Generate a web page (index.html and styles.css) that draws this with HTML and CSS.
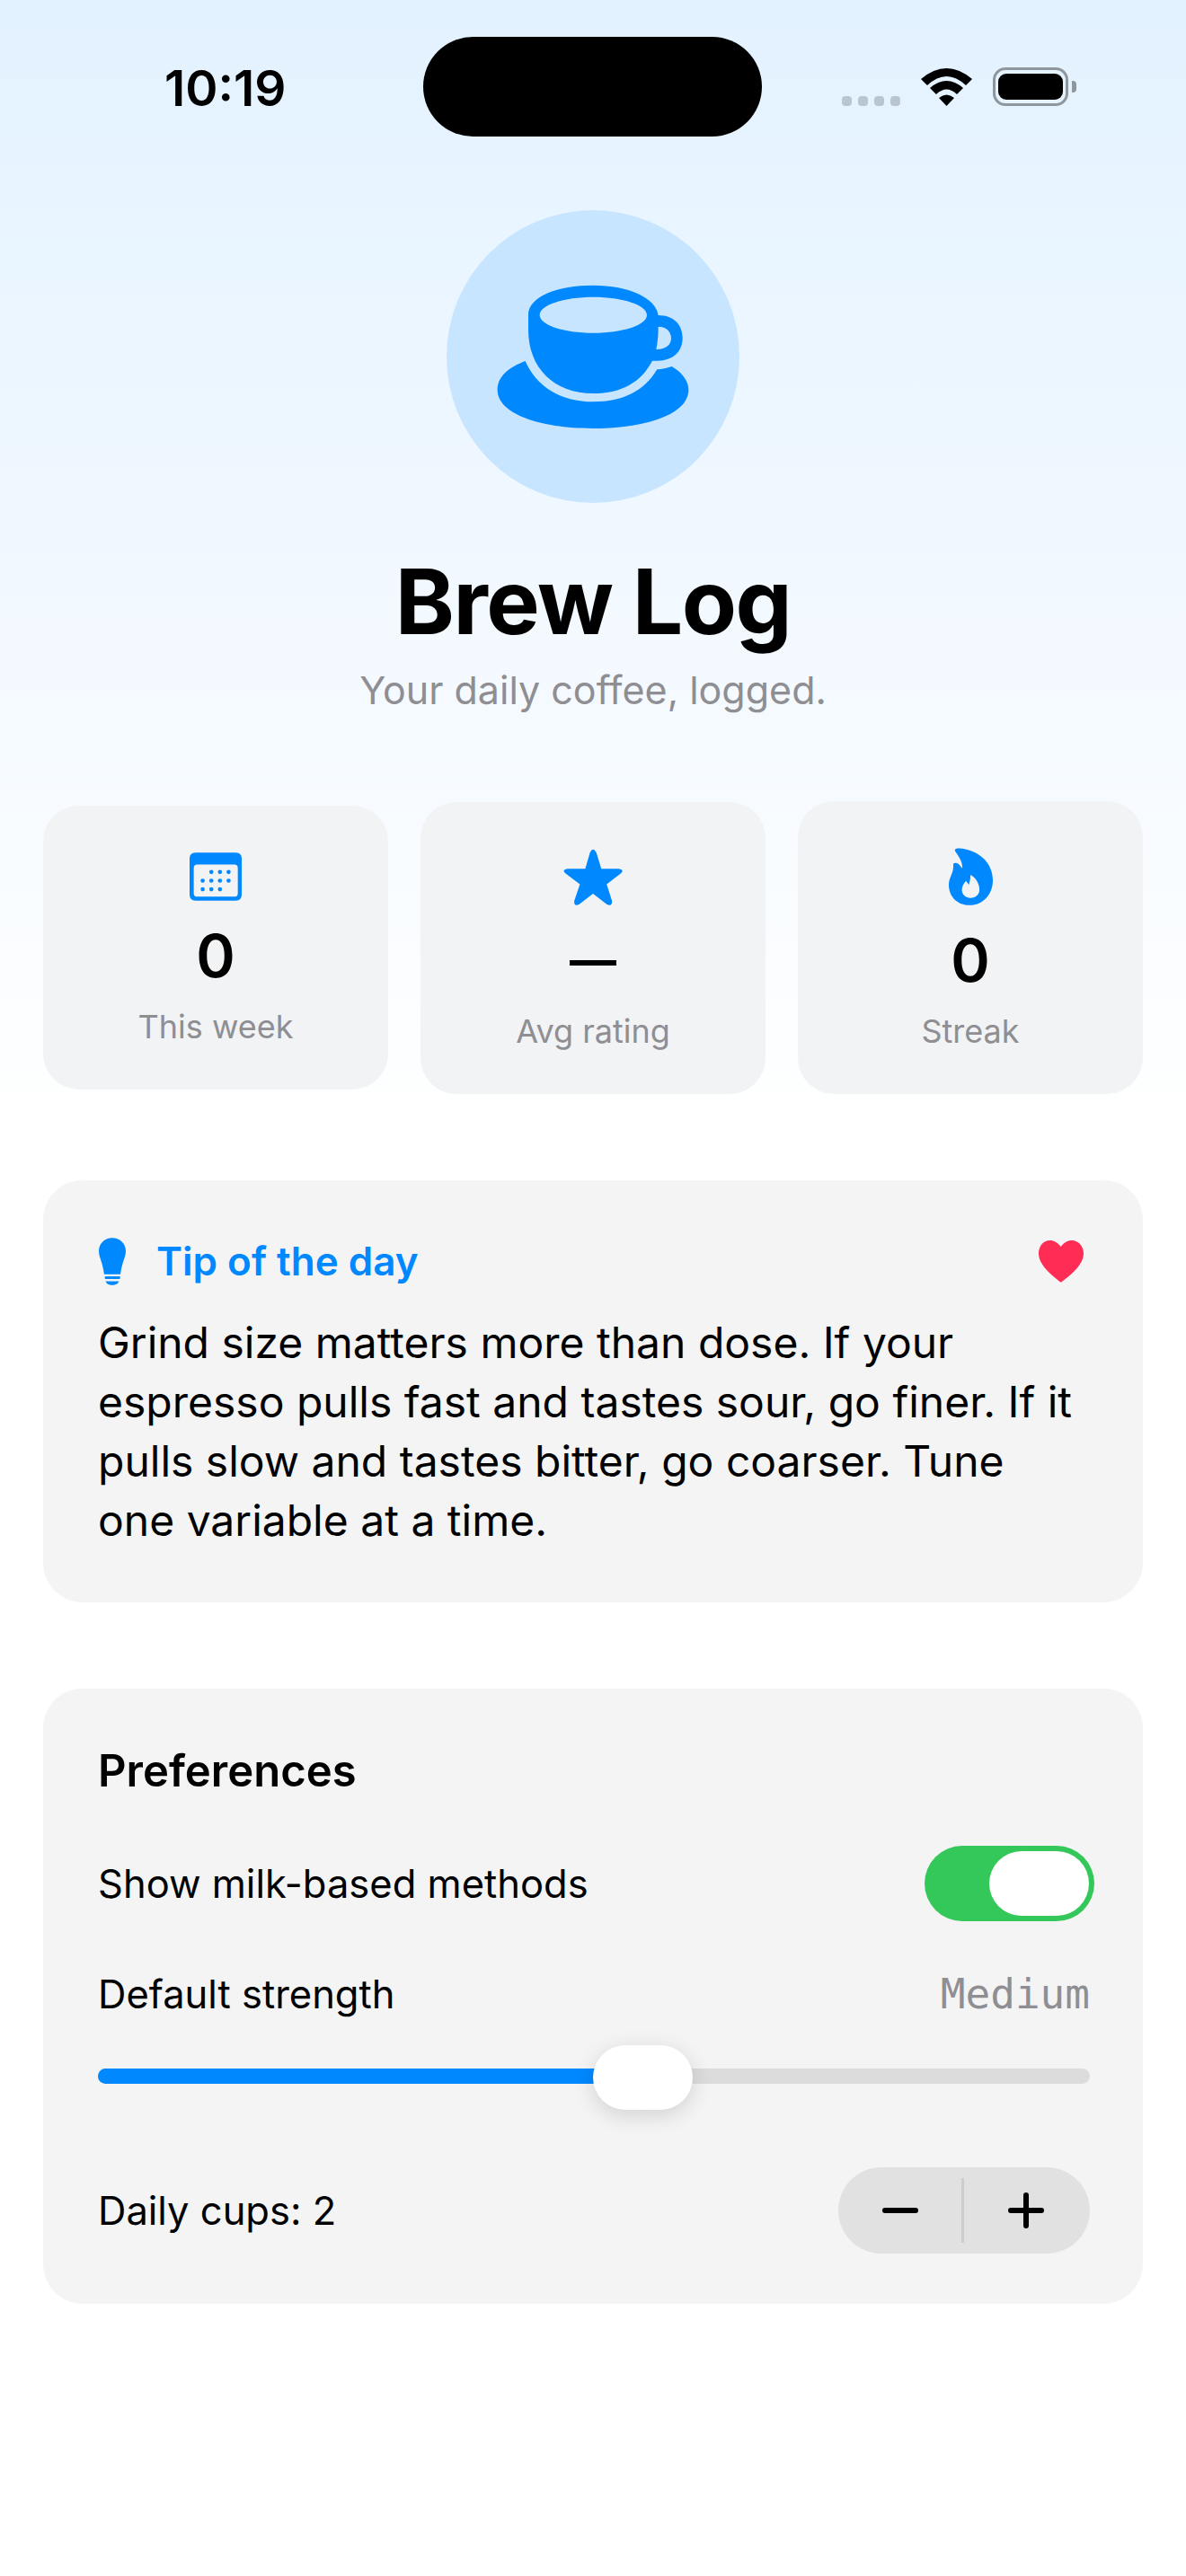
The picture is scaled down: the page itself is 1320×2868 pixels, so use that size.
FILE: index.html
```html
<!DOCTYPE html>
<html lang="en">

<head>
  <meta charset="UTF-8" />
  <meta name="viewport" content="width=device-width, initial-scale=1.0" />
  <title>Brew Log</title>
  <link rel="stylesheet" href="styles.css">
</head>

<body>
  <div class="status-bar">
    <span class="time">10:19</span>
    <div class="island"></div>
    <div class="status-icons">
      <div class="signal"><i></i><i></i><i></i><i></i></div>
      <svg class="wifi" viewBox="0 0 57 42">
        <path d="M0 12Q28.5 -12 57 12L50 19Q28.5 -1 7 19Z" />
        <path d="M10 22Q28.5 6 47 22L40 29Q28.5 18 17 29Z" />
        <path d="M20 33Q28.5 26 37 33L28.5 42Z" />
      </svg>
      <div class="battery"><div class="battery-fill"></div></div>
      <div class="battery-cap"></div>
    </div>
  </div>

  <header class="hero">
    <div class="hero-circle">
      <svg class="cup" viewBox="170 71 978 978">
        <path d="M433 575C380 595 340 625 340 672C340 750 480 800 658 800C840 800 978 750 978 672C978 640 955 612 922 593C905 599 890 602 873 603C830 675 760 711 660 711C550 711 470 660 433 575Z" />
        <path fill-rule="evenodd" d="M443 420C443 360 540 322 660 322C780 322 870 365 877 422C930 422 958 455 958 498C958 545 925 574 875 574L857 574C820 645 755 683 660 683C530 683 443 600 443 470ZM481 421C481 454 561 481 660 481C759 481 839 454 839 421C839 388 759 361 660 361C561 361 481 388 481 421ZM877 460C877 490 875 510 870 536C905 536 920 520 920 498C920 478 905 460 877 460Z" />
      </svg>
    </div>
    <h1>Brew Log</h1>
    <p class="subtitle">Your daily coffee, logged.</p>
  </header>

  <section class="stats">
    <div class="stat-card">
      <svg class="stat-icon" width="58" height="54" viewBox="543 237 175 161">
        <path fill-rule="evenodd" d="M563 237H698Q718 237 718 257V378Q718 398 698 398H563Q543 398 543 378V257Q543 237 563 237ZM569 277Q557 277 557 289V373Q557 385 569 385H693Q705 385 705 373V289Q705 277 693 277Z" />
        <circle cx="616" cy="302" r="7" /><circle cx="645" cy="302" r="7" /><circle cx="674" cy="302" r="7" />
        <circle cx="587" cy="331" r="7" /><circle cx="616" cy="331" r="7" /><circle cx="645" cy="331" r="7" /><circle cx="674" cy="331" r="7" />
        <circle cx="587" cy="360" r="7" /><circle cx="616" cy="360" r="7" /><circle cx="645" cy="360" r="7" />
      </svg>
      <div class="stat-value">0</div>
      <div class="stat-label">This week</div>
    </div>
    <div class="stat-card">
      <svg class="stat-icon" width="66" height="63" viewBox="530 221 198 190">
        <path d="M603 288L619 233Q629 213 640 233L657 288L716 288Q736 292 722 304L675 340L693 397Q693 417 675 407L629 372L583 407Q565 417 566 397L585 340L537 304Q523 292 543 288Z" />
      </svg>
      <div class="stat-value stat-dash">—</div>
      <div class="stat-label">Avg rating</div>
    </div>
    <div class="stat-card">
      <svg class="stat-icon" width="49" height="64" viewBox="527 222 148 192">
        <path fill-rule="evenodd" d="M548 232C546 226 552 222 560 223C625 226 675 270 675 330C675 380 640 414 598 414C555 414 527 385 527 345C527 320 545 305 542 278C541 270 553 270 560 276L572 290C575 270 560 250 548 232ZM600 312C600 322 598 335 594 345L585 332C578 340 571 350 571 362C571 378 583 390 600 390C618 390 630 378 630 362C630 345 620 322 600 312Z" />
      </svg>
      <div class="stat-value">0</div>
      <div class="stat-label">Streak</div>
    </div>
  </section>

  <section class="card tip">
    <div class="tip-head">
      <svg class="bulb" viewBox="250 233 95 161">
        <path d="M297 234C325 234 343 255 343 278C343 300 330 315 325 357L270 357C265 315 252 300 252 278C252 255 270 234 297 234Z" />
        <rect x="272" y="364" width="52" height="9" rx="3" />
        <path d="M275 380L320 380C318 388 308 393 297 393C286 393 277 388 275 380Z" />
      </svg>
      <h2>Tip of the day</h2>
      <svg class="heart" viewBox="468 245 149 140">
        <path d="M542 266C530 250 515 245 505 245C483 245 468 265 468 288C468 325 510 360 542 384C575 360 617 325 617 288C617 265 600 245 578 245C568 245 552 250 542 266Z" />
      </svg>
    </div>
    <p>Grind size matters more than dose. If your espresso pulls fast and tastes sour, go finer. If it pulls slow and tastes bitter, go coarser. Tune one variable at a time.</p>
  </section>

  <section class="card prefs">
    <h3>Preferences</h3>
    <div class="row toggle-row">
      <span>Show milk-based methods</span>
      <div class="toggle"><div class="toggle-knob"></div></div>
    </div>
    <div class="row strength-row">
      <span>Default strength</span>
      <span class="mono">Medium</span>
    </div>
    <div class="slider">
      <div class="track"><div class="track-fill" style="width: 51%"></div></div>
      <div class="slider-knob" style="left: 49.9%"></div>
    </div>
    <div class="row cups-row">
      <span>Daily cups: 2</span>
      <div class="stepper">
        <div class="step"><svg viewBox="0 0 40 40"><path d="M3 20H37" /></svg></div>
        <div class="step-divider"></div>
        <div class="step"><svg viewBox="0 0 40 40"><path d="M3 20H37M20 3V37" /></svg></div>
      </div>
    </div>
  </section>
</body>

</html>
```

FILE: styles.css
```css
body {
  margin: 0;
  width: 1320px;
  height: 2868px;
  overflow: hidden;
  font-family: Inter, "Liberation Sans", sans-serif;
  color: #000;
  background: linear-gradient(180deg, #e3f2ff 0, #ffffff 1260px);
}

/* status bar */
.status-bar {
  display: flex;
  align-items: flex-start;
  padding: 41px 122px 0 183px;
}

.time {
  width: 288px;
  margin-top: 30px;
  font-size: 55px;
  line-height: 54px;
  font-weight: 600;
}

.island {
  width: 377px;
  height: 111px;
  border-radius: 56px;
  background: #000;
}

.status-icons {
  display: flex;
  align-items: flex-end;
  margin-left: 89px;
  height: 77px;
}

.signal {
  display: flex;
  gap: 7px;
  margin-right: 23px;
}

.signal i {
  display: block;
  width: 11px;
  height: 11px;
  border-radius: 4px;
  background: #b9c6cf;
}

.wifi {
  width: 57px;
  height: 42px;
  margin-right: 23px;
  fill: #000;
}

.battery {
  box-sizing: border-box;
  width: 84px;
  height: 43px;
  padding: 4px 3px;
  border: 3px solid #8f979c;
  border-radius: 14px;
}

.battery-fill {
  height: 100%;
  border-radius: 9px;
  background: #000;
}

.battery-cap {
  width: 5px;
  height: 13px;
  margin: 0 0 15px 4px;
  border-radius: 0 4px 4px 0;
  background: #8f979c;
}

/* hero */
.hero {
  display: flex;
  flex-direction: column;
  align-items: center;
  margin-top: 82px;
}

.hero-circle {
  width: 326px;
  height: 326px;
  border-radius: 50%;
  background: #c8e5ff;
}

.cup {
  display: block;
  width: 326px;
  height: 326px;
  fill: #0088ff;
}

h1 {
  margin: 50px 0 0;
  font-size: 100px;
  line-height: 120px;
  font-weight: 700;
  letter-spacing: -1.5px;
}

.subtitle {
  margin: 10px 0 0;
  font-size: 43px;
  line-height: 56px;
  color: #8e8e93;
}

/* stats */
.stats {
  display: flex;
  align-items: center;
  gap: 36px;
  margin: 96px 48px 0;
}

.stat-card {
  flex: 1;
  display: flex;
  flex-direction: column;
  align-items: center;
  padding: 52px 0 48px;
  border-radius: 40px;
  background: #f2f3f5;
}

.stat-icon {
  display: block;
  fill: #0088ff;
}

.stat-value {
  margin-top: 26px;
  font-size: 66px;
  line-height: 70px;
  font-weight: 600;
}

.stat-dash {
  margin-top: 28px;
  font-size: 52px;
  line-height: 68px;
  font-weight: 700;
}

.stat-label {
  margin-top: 22px;
  font-size: 36px;
  line-height: 44px;
  color: #8e8e93;
}

/* cards */
.card {
  margin: 96px 48px 0;
  padding: 64px 59px 56px 61px;
  border-radius: 44px;
  background: #f4f4f4;
}

.tip {
  padding-right: 66px;
  padding-bottom: 58px;
}

.tip-head {
  display: flex;
  align-items: center;
}

.bulb {
  width: 32px;
  height: 53px;
  fill: #0088ff;
}

.tip-head h2 {
  flex: 1;
  margin: 0 0 0 33px;
  font-size: 44px;
  line-height: 53px;
  font-weight: 600;
  color: #0088ff;
}

.heart {
  width: 50px;
  height: 47px;
  fill: #ff2d55;
}

.tip p {
  margin: 31px 0 0;
  font-size: 48px;
  line-height: 66px;
}

.prefs {
  padding-top: 63px;
}

.prefs h3 {
  margin: 0;
  font-size: 49px;
  line-height: 58px;
  font-weight: 600;
}

.row {
  display: flex;
  align-items: center;
  justify-content: space-between;
  font-size: 43.5px;
  line-height: 56px;
}

.toggle-row {
  margin-top: 54px;
}

.toggle {
  box-sizing: border-box;
  display: flex;
  justify-content: flex-end;
  width: 189px;
  height: 84px;
  margin-right: -5px;
  padding: 6px;
  border-radius: 42px;
  background: #34c759;
}

.toggle-knob {
  width: 111px;
  height: 72px;
  border-radius: 36px;
  background: #fff;
}

.strength-row {
  margin-top: 53px;
}

.mono {
  font-family: "DejaVu Sans Mono", "Liberation Mono", monospace;
  font-size: 46px;
  color: #8e8e93;
}

.slider {
  position: relative;
  height: 72px;
  margin-top: 29px;
}

.track {
  position: relative;
  top: 26px;
  height: 17px;
  border-radius: 9px;
  background: #dcdcdc;
  overflow: hidden;
}

.track-fill {
  height: 100%;
  background: #0088ff;
}

.slider-knob {
  position: absolute;
  top: 0;
  width: 111px;
  height: 72px;
  border-radius: 36px;
  background: #fff;
  box-shadow: 0 6px 24px rgba(0, 0, 0, 0.14);
}

.cups-row {
  margin-top: 64px;
}

.stepper {
  box-sizing: border-box;
  display: flex;
  align-items: center;
  width: 280px;
  height: 96px;
  padding-right: 3px;
  border-radius: 48px;
  background: #e1e1e1;
}

.step {
  flex: 1;
  display: flex;
  justify-content: center;
}

.step svg {
  display: block;
  width: 40px;
  height: 40px;
  fill: none;
  stroke: #000;
  stroke-width: 6;
  stroke-linecap: round;
}

.step-divider {
  width: 3px;
  height: 72px;
  background: #cdcdcd;
}
```
